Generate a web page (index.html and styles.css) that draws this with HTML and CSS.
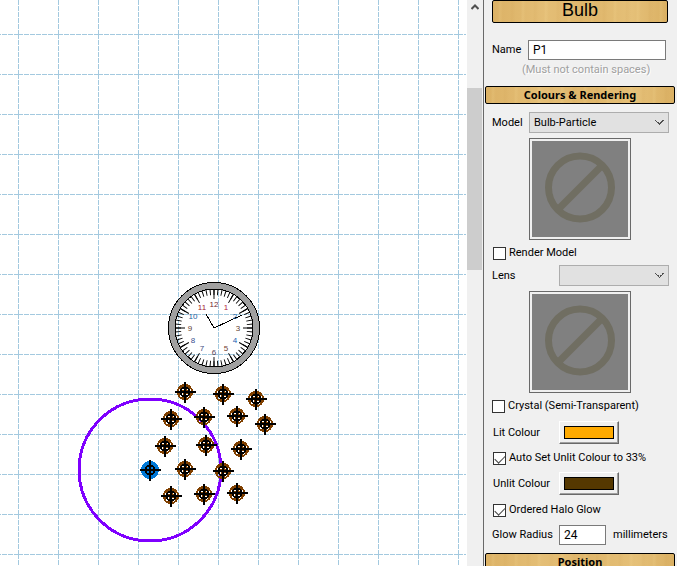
FILE: index.html
```html
<!DOCTYPE html>
<html lang="en">
<head>
<meta charset="utf-8">
<title>Bulb</title>
<link rel="stylesheet" href="styles.css">
</head>
<body>
<main class="app">
  <section class="canvas" aria-label="Layout canvas">
    <svg class="drawing" shape-rendering="crispEdges">
      <defs>
        <pattern id="grid" width="40" height="40" x="18" y="34" patternUnits="userSpaceOnUse">
          <path d="M0 .5H40M.5 0V40" stroke="#a3c9df" fill="none" stroke-dasharray="5 1"/>
        </pattern>
        <g id="target">
          <circle r="4.500" fill="none" stroke="#000" stroke-width="2"/>
          <path d="M-10 0H11M0 -10V11" stroke="#000" stroke-width="2"/>
        </g>
        <g id="bulb">
          <circle r="7.300" fill="none" stroke="#804000" stroke-width="1.500"/>
          <circle r="5.800" fill="none" stroke="#804000" stroke-width="2" stroke-dasharray="5 2"/>
          <circle r="4.500" fill="#fff" stroke="#000" stroke-width="2"/>
          <circle r="2.500" fill="none" stroke="#804000" stroke-width="1" stroke-dasharray="2 2"/>
          <path d="M-10 0H11M0 -10V11" stroke="#000" stroke-width="2"/>
        </g>
      </defs>
      <rect width="100%" height="100%" fill="url(#grid)"/>
      <g transform="translate(214 328)">
        <circle r="42" fill="none" stroke="#a0a0a0" stroke-width="7"/>
        <circle r="45.500" fill="none" stroke="#000"/>
        <circle r="39" fill="none" stroke="#000"/>
        <g shape-rendering="auto" fill="none" stroke="#000">
          <circle r="36" stroke-width="6" pathLength="600" stroke-dasharray="2.600 7.400" stroke-dashoffset="1.300"/>
          <circle r="34" stroke-width="10" pathLength="120" stroke-dasharray=".6 9.400" stroke-dashoffset=".3"/>
        </g>
        <path d="M-8 -14L0 0L28 -13" fill="none" stroke="#000"/>
        <g class="numerals">
          <text x="0" y="-21" fill="#702830">12</text><text x="12" y="-18" fill="#b02040">1</text>
          <text x="21" y="-9" fill="#2060a0">2</text><text x="24" y="3" fill="#604030">3</text>
          <text x="21" y="15" fill="#2060b0">4</text><text x="12" y="23" fill="#704030">5</text>
          <text x="0" y="27" fill="#504050">6</text><text x="-12" y="23" fill="#3a4a80">7</text>
          <text x="-21" y="15" fill="#3a5090">8</text><text x="-24" y="3" fill="#604030">9</text>
          <text x="-21" y="-9" fill="#2060a0">10</text><text x="-12" y="-18" fill="#a02030">11</text>
        </g>
      </g>
      <circle cx="150" cy="470" r="71" fill="none" stroke="#7f00ff" stroke-width="3"/>
      <circle cx="150" cy="470" r="9" fill="#0078d7"/>
      <use href="#target" x="150" y="470"/>
      <use href="#bulb" x="185" y="392"/><use href="#bulb" x="223" y="394"/>
      <use href="#bulb" x="256" y="399"/><use href="#bulb" x="265" y="424"/>
      <use href="#bulb" x="171" y="419"/><use href="#bulb" x="204" y="417"/>
      <use href="#bulb" x="237" y="416"/><use href="#bulb" x="165" y="446"/>
      <use href="#bulb" x="206" y="445"/><use href="#bulb" x="241" y="449"/>
      <use href="#bulb" x="185" y="469"/><use href="#bulb" x="223" y="471"/>
      <use href="#bulb" x="171" y="496"/><use href="#bulb" x="204" y="494"/>
      <use href="#bulb" x="237" y="493"/>
    </svg>
  </section>
  <div class="scrollbar">
    <svg class="up" viewBox="0 0 8 6"><path d="M.5 5L4 1.500L7.500 5"/></svg>
    <div class="thumb"></div>
  </div>
  <form class="panel">
    <h1 class="title wood">Bulb</h1>
    <div class="row name"><label for="name">Name</label><input id="name" type="text" value="P1"></div>
    <p class="hint">(Must not contain spaces)</p>
    <h2 class="bar wood">Colours &amp; Rendering</h2>
    <div class="row model"><label for="model">Model</label><select id="model"><option>Bulb-Particle</option></select></div>
    <div class="preview"><svg viewBox="0 0 96 96"><circle cx="48" cy="46.500" r="31.500"/><path d="M26 68.500L70 24.500"/></svg></div>
    <label class="check render"><input type="checkbox">Render Model</label>
    <div class="row lens"><label for="lens">Lens</label><select id="lens"><option></option></select></div>
    <div class="preview"><svg viewBox="0 0 96 96"><circle cx="48" cy="46.500" r="31.500"/><path d="M26 68.500L70 24.500"/></svg></div>
    <label class="check"><input type="checkbox">Crystal (Semi-Transparent)</label>
    <div class="row colour"><label for="lit">Lit Colour</label><button id="lit" type="button"><span class="swatch lit"></span></button></div>
    <label class="check auto"><input type="checkbox" checked>Auto Set Unlit Colour to 33%</label>
    <div class="row colour"><label for="unlit">Unlit Colour</label><button id="unlit" type="button"><span class="swatch unlit"></span></button></div>
    <label class="check halo"><input type="checkbox" checked>Ordered Halo Glow</label>
    <div class="row glow"><label for="glow">Glow Radius</label><input id="glow" type="text" value="24"><span>millimeters</span></div>
    <h2 class="bar wood">Position</h2>
  </form>
</main>
</body>
</html>
```
FILE: styles.css
```css
* { box-sizing: border-box; }
body { margin: 0; background: #fff; color: #000; font: 11px/14px Roboto, sans-serif; }
.app { display: grid; grid-template-columns: 1fr 16px 195px; height: 100vh; overflow: hidden; }
.canvas { overflow: hidden; padding-right: 1px; }
.drawing { display: block; width: 100%; height: 100%; }
.numerals { font: 8px "Liberation Sans", sans-serif; text-anchor: middle; }

.scrollbar { display: flex; flex-direction: column; gap: 78px; background: #f0f0f0; }
.up { width: 8px; height: 6px; margin: 4px 0 0 4px; fill: none; stroke: #505050; stroke-width: 2; }
.thumb { width: 15px; height: 182px; background: #cdcdcd; }

.panel { background: #f0f0f0; border-left: 1px solid #696969; border-right: 1px solid #fff; }
.wood {
  margin: 0;
  border: 1px solid #000;
  border-radius: 2px;
  text-align: center;
  background:
    repeating-linear-gradient(91deg, #fff0 0 5px, #ffe9a820 7px, #fff0 10px 17px, #b8823810 19px, #fff0 23px),
    linear-gradient(90deg, #dcb266, #e4be76 30%, #dfb66b 55%, #e5c078 80%, #dab063);
}
.title { height: 23px; margin: 0 9px 0 8px; font: 18px/18px "Liberation Sans", sans-serif; }
.bar { height: 18px; margin: 0 2px 0 1px; font: bold 11px/16px "Noto Sans", sans-serif; }

.row { display: flex; align-items: center; justify-content: space-between; height: 20px; padding: 0 8px; }
input, select, button { margin: 0; font: inherit; color: inherit; }
input[type="text"] { height: 20px; padding: 0 4px; border: 1px solid #7a7a7a; background: #fff; font-size: 12px; }
.name { margin-top: 17px; padding-right: 11px; }
#name { width: 138px; }
.hint { margin: 3px 0 9px; padding-left: 38px; color: #a0a0a0; text-shadow: 1px 1px #fff; }
select {
  appearance: none;
  width: 140px;
  height: 21px;
  padding: 0 4px;
  border: 1px solid #adadad;
  border-radius: 0;
  background:
    linear-gradient(45deg, #0000 45%, #505050 45% 60%, #0000 60%) right 8px center / 5px 5px no-repeat,
    linear-gradient(-45deg, #0000 45%, #505050 45% 60%, #0000 60%) right 4px center / 5px 5px no-repeat,
    #e1e1e1;
}
#lens { width: 110px; }
.model { height: 21px; margin: 8px 0 5px; }
.lens { height: 21px; margin: 5px 0; }
.preview { width: 102px; margin: 0 0 6px 45px; padding: 2px; border: 1px solid #696969; }
.preview svg { display: block; width: 100%; background: #808080; fill: none; stroke: #706e62; stroke-width: 7; }

.check { display: flex; align-items: center; gap: 3px; height: 14px; padding-left: 8px; }
.render, .auto, .halo { padding-left: 9px; }
.check input { appearance: none; display: grid; place-items: start center; width: 13px; height: 13px; border: 1px solid #333; background: #fff; }
.check input:checked::after {
  content: "";
  width: 9px;
  height: 5px;
  margin-top: 2px;
  border: solid #444;
  border-width: 0 0 1px 1px;
  transform: rotate(-45deg);
}
.colour { height: 23px; margin: 8px 0 7px; padding-left: 9px; }
.colour button { width: 60px; height: 23px; margin-right: 50px; padding: 4px; border: 1px solid; border-color: #fff #696969 #696969 #fff; box-shadow: inset -1px -1px #a0a0a0; background: #f0f0f0; }
.swatch { display: block; height: 13px; border: 1px solid #000; }
.swatch.lit { background: #ffaa00; }
.swatch.unlit { background: #553800; }
.auto + .colour { margin: 7px 0 8px; }
.glow { justify-content: flex-start; margin: 8px 0; }
.glow label { width: 67px; }
.glow span { margin-left: 7px; }
#glow { width: 47px; }
```
